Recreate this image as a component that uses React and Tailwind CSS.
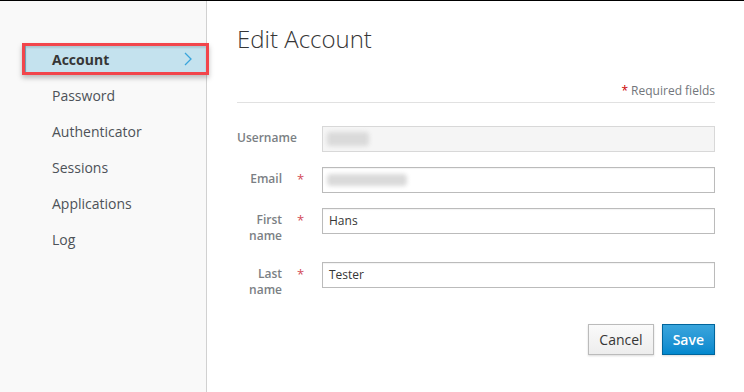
import { useState } from 'react'

const navItems = ['Password', 'Authenticator', 'Sessions', 'Applications', 'Log']

const fields = [
  { label: 'Username', disabled: true, blur: 'w-[42px] h-[14px]' },
  { label: 'Email', required: true, blur: 'w-[80px] h-[12px]' },
  { label: 'First name', required: true, value: 'Hans' },
  { label: 'Last name', required: true, value: 'Tester' },
]

function Field({ field }) {
  return (
    <div className="flex items-start">
      <div
        className={`w-[58px] shrink-0 pt-[4px] pb-[3px] text-right text-[12px] font-semibold leading-[16px] text-[#7b7f84] ${
          field.required ? 'pr-[13px]' : 'whitespace-nowrap'
        }`}
      >
        {field.label}
      </div>
      <div className="w-[27px] shrink-0 pt-[4px] pl-[2px] text-[13px] leading-[16px] text-[#d34b57]">
        {field.required ? '*' : ''}
      </div>
      <div
        className={`flex h-[26px] flex-1 items-center border px-[6px] text-[12px] text-[#363636] ${
          field.disabled ? 'border-[#d8d8d8] bg-[#f5f5f5]' : 'border-[#bbbbbb] bg-white shadow-[inset_0_1px_1px_rgba(0,0,0,0.05)]'
        }`}
      >
        {field.value ? (
          <span>{field.value}</span>
        ) : (
          <span className={`${field.blur} ml-[-2px] rounded-sm bg-[#dadada] blur-[2px]`} />
        )}
      </div>
    </div>
  )
}

export default function App() {
  const [active] = useState('Account')

  return (
    <div className="flex h-[392px] w-[744px] overflow-hidden border-t border-black bg-white font-['Open_Sans',sans-serif]">
      <aside className="w-[207px] shrink-0 border-r border-[#d1d1d1] bg-[#f9f9f9] pt-[40px]">
        <div className="flex h-[36px] items-center">
          <div className="relative z-10 ml-[22px] -mr-[3px] flex h-[32px] flex-1 border-[3px] border-[#f2454b] shadow-[0_3px_5px_rgba(0,0,0,0.25)]">
            <div className="flex flex-1 items-center justify-between border-l border-[#6e9fb3] bg-[#c4e2ee] pl-[26px] pr-[14px] shadow-[inset_0_2px_2px_rgba(0,0,0,0.12)]">
              <span className="text-[14px] font-bold text-[#363636]">{active}</span>
              <svg width="8" height="14" viewBox="0 0 8 14" fill="none">
                <polyline points="1,1 7,7 1,13" stroke="#39a5dc" strokeWidth="1.3" />
              </svg>
            </div>
          </div>
        </div>
        {navItems.map((item) => (
          <div key={item} className="flex h-[36px] items-center pl-[52px] text-[14px] text-[#4d5258]">
            {item}
          </div>
        ))}
      </aside>

      <main className="flex-1 pl-[30px] pr-[29px]">
        <h1 className="pt-[23px] text-[24px] font-light leading-[30px] text-[#363636]">Edit Account</h1>
        <div className="mt-[29px] border-b border-[#e1e1e1] pb-[3px] text-right text-[12px] leading-[16px] text-[#72767b]">
          <span className="text-[#cc0000]">*</span> Required fields
        </div>

        <div className="mt-[23px] flex flex-col gap-[15px]">
          {fields.map((field) => (
            <Field key={field.label} field={field} />
          ))}
        </div>

        <div className="mt-[23px] flex justify-end gap-[8px]">
          <button
            type="button"
            className="h-[31px] border border-[#bbbbbb] bg-gradient-to-b from-[#fafafa] to-[#ededed] px-[10px] text-[14px] text-[#363636] shadow-[0_1px_2px_rgba(0,0,0,0.15)]"
          >
            Cancel
          </button>
          <button
            type="button"
            className="h-[31px] border border-[#00659c] bg-gradient-to-b from-[#39a5dc] to-[#0088ce] px-[10px] text-[14px] font-semibold text-white shadow-[0_1px_2px_rgba(0,0,0,0.15)]"
          >
            Save
          </button>
        </div>
      </main>
    </div>
  )
}
